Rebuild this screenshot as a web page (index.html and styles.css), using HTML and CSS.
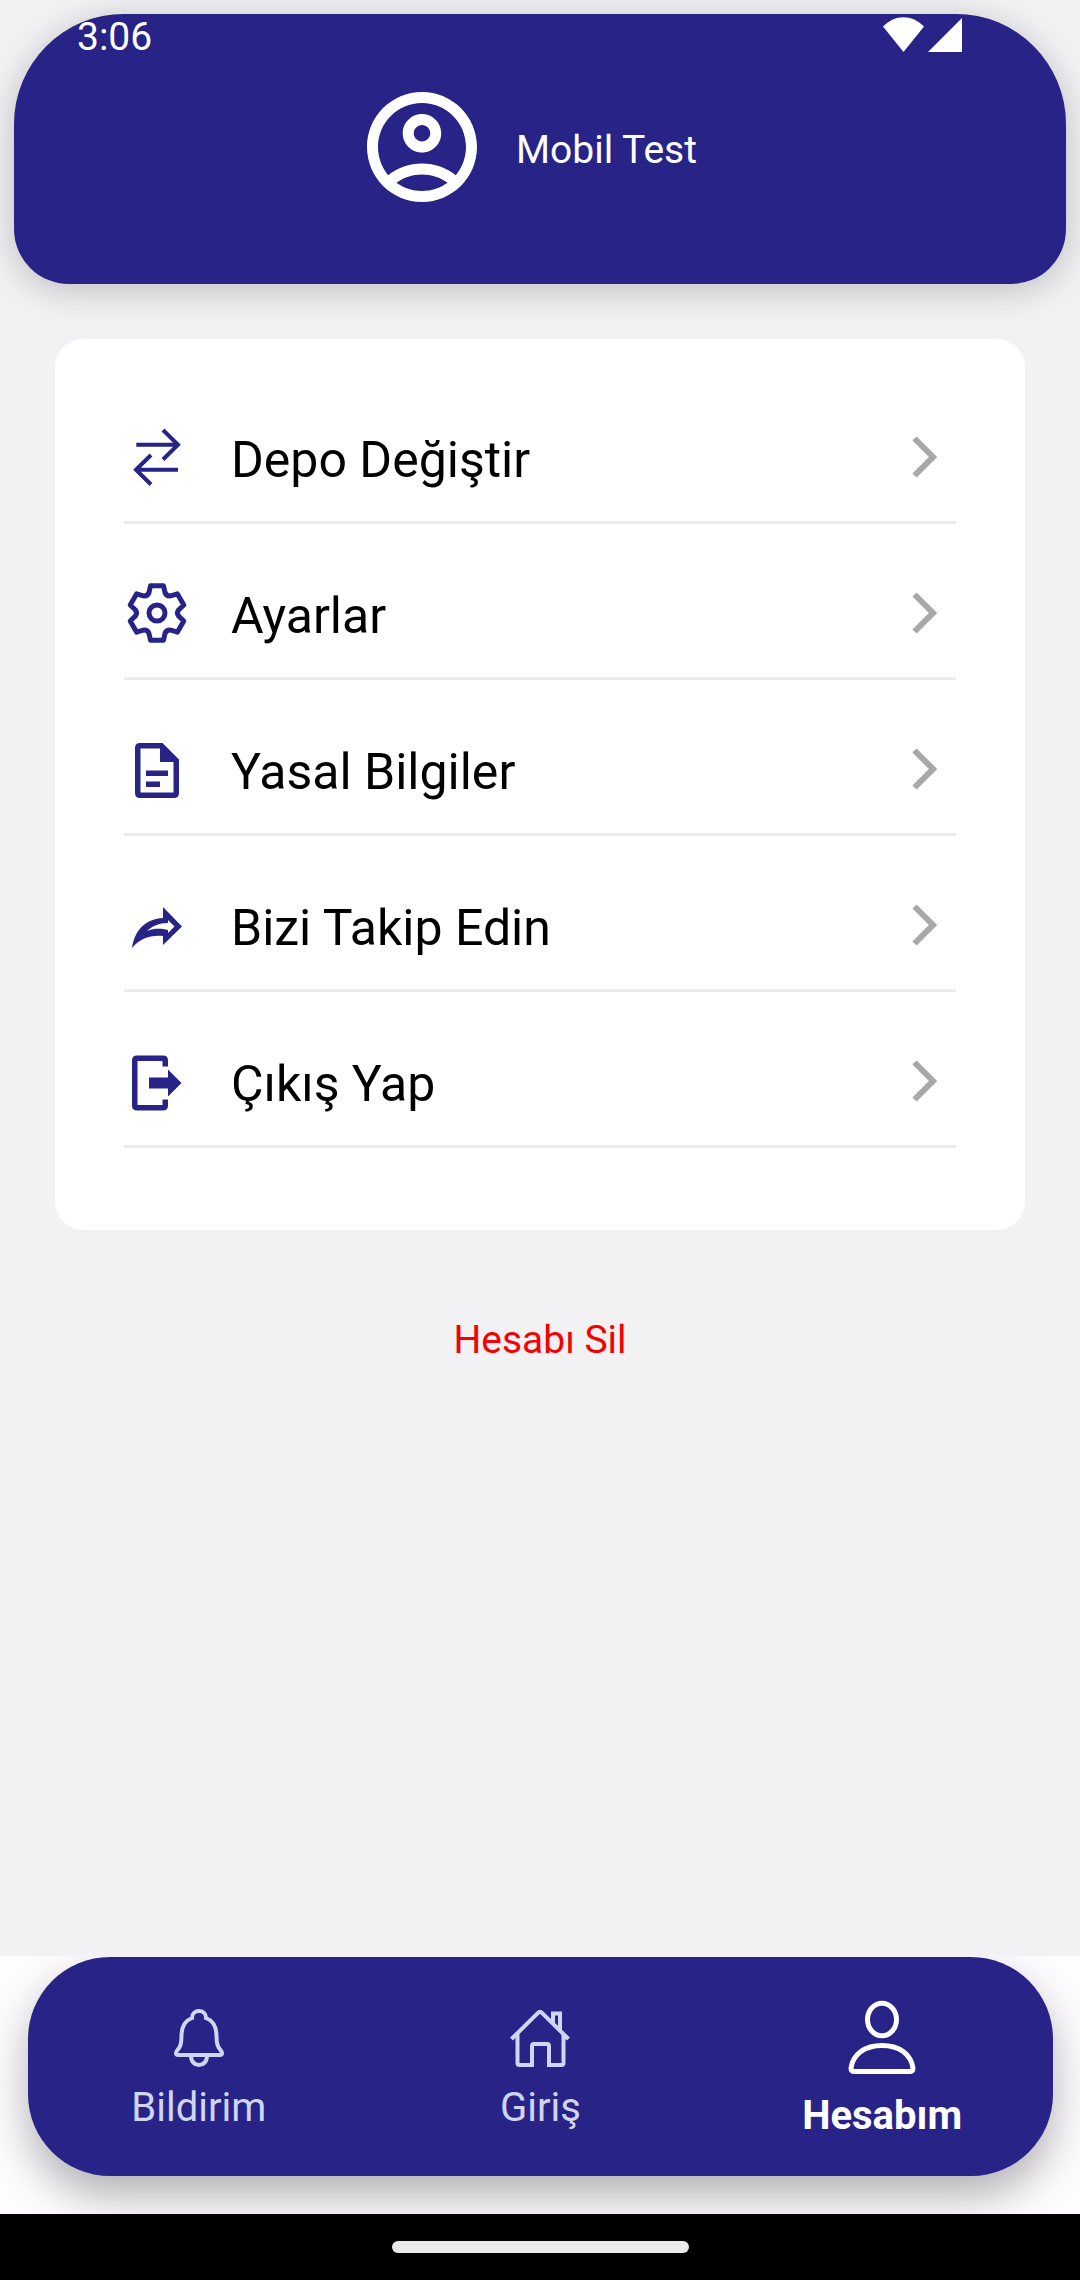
FILE: index.html
```html
<!DOCTYPE html>
<html lang="tr">
<head>
<meta charset="utf-8">
<meta name="viewport" content="width=device-width, initial-scale=1">
<title>Hesabım</title>
<link rel="stylesheet" href="styles.css">
</head>
<body>
<header class="header">
  <div class="status">
    <span>3:06</span>
    <span class="status-icons">
      <svg width="41" height="35" viewBox="0 0 41 35" aria-hidden="true"><path d="M20.500 35L0 9.500C12-3 29-3 41 9.500Z"/></svg>
      <svg width="34" height="35" viewBox="0 0 34 35" aria-hidden="true"><path d="M34 1V35H0Z"/></svg>
    </span>
  </div>
  <div class="profile">
    <svg class="avatar" viewBox="0 0 24 24" aria-hidden="true"><path d="M12 2C6.480 2 2 6.480 2 12s4.480 10 10 10 10-4.480 10-10S17.520 2 12 2zM7.350 18.500C8.660 17.560 10.260 17 12 17s3.340.560 4.650 1.500C15.340 19.440 13.740 20 12 20s-3.340-.560-4.650-1.500zm10.790-1.380C16.450 15.800 14.320 15 12 15s-4.450.800-6.140 2.120C4.700 15.730 4 13.950 4 12c0-4.420 3.580-8 8-8s8 3.580 8 8c0 1.950-.700 3.730-1.860 5.120z"/><path d="M12 6c-1.930 0-3.500 1.570-3.500 3.500S10.070 13 12 13s3.500-1.570 3.500-3.500S13.930 6 12 6zm0 5c-.830 0-1.500-.670-1.500-1.500S11.170 8 12 8s1.500.670 1.500 1.500S12.830 11 12 11z"/></svg>
    <span class="name">Mobil Test</span>
  </div>
</header>

<main class="main">
  <ul class="menu">
    <li><button class="row" type="button">
      <svg class="icon line" viewBox="0 0 66 66" aria-hidden="true"><path d="M12.300 20.700H53M39 6L54 20.700L39 35.500M54 45.700H13M27 31L12 45.700L27 60.500"/></svg>
      <span class="label">Depo Değiştir</span>
      <svg class="chevron" viewBox="0 0 26 42" aria-hidden="true"><path d="M2.500 2.500L21 21L2.500 39.500"/></svg>
    </button></li>
    <li><button class="row" type="button">
      <svg class="icon gear" viewBox="-33 -33 66 66" aria-hidden="true"><path d="M-8-20.500L-6.500-27.200H6.500L8-20.500Q9.500-16.500 13.800-17.200L20.300-19.200L26.800-8L21.800-3.300Q19 0 21.800 3.300L26.800 8L20.300 19.200L13.800 17.200Q9.500 16.500 8 20.500L6.500 27.200H-6.500L-8 20.500Q-9.500 16.500-13.800 17.200L-20.300 19.200L-26.800 8L-21.800 3.300Q-19 0-21.800-3.300L-26.800-8L-20.300-19.200L-13.800-17.200Q-9.500-16.500-8-20.500Z"/><circle r="8"/></svg>
      <span class="label">Ayarlar</span>
      <svg class="chevron" viewBox="0 0 26 42" aria-hidden="true"><path d="M2.500 2.500L21 21L2.500 39.500"/></svg>
    </button></li>
    <li><button class="row" type="button">
      <svg class="icon" viewBox="0 0 66 66" aria-hidden="true"><path fill-rule="evenodd" d="M16 7H38.500L55 23.500V57Q55 62 50 62H16Q11 62 11 57V12Q11 7 16 7ZM16.500 12.500V56.500H49.500V26H36V12.500Z"/><path d="M22 34.500H44V40H22ZM22 45.500H36V51H22Z"/></svg>
      <span class="label">Yasal Bilgiler</span>
      <svg class="chevron" viewBox="0 0 26 42" aria-hidden="true"><path d="M2.500 2.500L21 21L2.500 39.500"/></svg>
    </button></li>
    <li><button class="row" type="button">
      <svg class="icon" viewBox="0 0 66 66" aria-hidden="true"><path fill-rule="evenodd" d="M39 15L58 34.500L39 53V44C25 43 16 47 8 56C11 37 22 27 39 26ZM44 28V31C35 31 28 34 23 39C30 36 38 36.500 44 38V41L50.500 34.500Z"/></svg>
      <span class="label">Bizi Takip Edin</span>
      <svg class="chevron" viewBox="0 0 26 42" aria-hidden="true"><path d="M2.500 2.500L21 21L2.500 39.500"/></svg>
    </button></li>
    <li><button class="row" type="button">
      <svg class="icon" viewBox="0 0 66 66" aria-hidden="true"><path d="M44 18.500H38.500V13H13.500V57H38.500V51.500H44V57.500Q44 62.500 39 62.500H13Q8 62.500 8 57.500V12.500Q8 7.500 13 7.500H39Q44 7.500 44 12.500ZM25 29.500H44V21.500L57.500 35L44 48.500V40.500H25Z"/></svg>
      <span class="label">Çıkış Yap</span>
      <svg class="chevron" viewBox="0 0 26 42" aria-hidden="true"><path d="M2.500 2.500L21 21L2.500 39.500"/></svg>
    </button></li>
  </ul>
  <button class="delete" type="button">Hesabı Sil</button>
</main>

<footer class="footer">
  <nav class="tabs">
    <a class="tab" href="#bildirim">
      <svg width="50" height="58" viewBox="0 0 50 58" aria-hidden="true"><path d="M18 9C18-.300 32-.300 32 9C40 12 42.500 19 42.500 27C42.500 36 44 38 47.500 42.500Q49 46 46 46H4Q1 46 2.500 42.500C6 38 7.500 36 7.500 27C7.500 19 10 12 18 9ZM17 47C17 59 33 59 33 47"/></svg>
      <span>Bildirim</span>
    </a>
    <a class="tab" href="#giris">
      <svg width="60" height="58" viewBox="0 0 60 58" aria-hidden="true"><path d="M1.500 30L28 4Q30 1.500 32 4L58.500 30M7.500 25V54Q7.500 56 9.500 56H22V37Q22 35 24 35H37Q39 35 39 37V56H51.500Q53.500 56 53.500 54V25M43 14V4.500H50V22"/></svg>
      <span>Giriş</span>
    </a>
    <a class="tab active" href="#hesabim" aria-current="page">
      <svg width="68" height="75" viewBox="0 0 68 75" aria-hidden="true"><ellipse cx="34" cy="19.500" rx="14.500" ry="16.300"/><path d="M3 68C5 54 17 45.500 34 45.500S63 54 65 68Q65 71.500 61.500 71.500H6.500Q3 71.500 3 68Z"/></svg>
      <span>Hesabım</span>
    </a>
  </nav>
</footer>
<div class="system-bar"><span class="handle"></span></div>
</body>
</html>
```
FILE: styles.css
```css
* {
  box-sizing: border-box;
}

:root {
  --brand: #272387;
}

body {
  margin: 0;
  min-height: 100vh;
  display: flex;
  flex-direction: column;
  background: #f2f1f3;
  font-family: Roboto, "Noto Sans", sans-serif;
  font-size: 39px;
  line-height: 46px;
}

button {
  font: inherit;
  color: inherit;
  border: 0;
  background: none;
  cursor: pointer;
}

.header {
  margin: 14px;
  margin-bottom: 55px;
  padding-bottom: 71px;
  border-radius: 110px 110px 55px 55px;
  background: var(--brand);
  color: #fff;
  fill: #fff;
  box-shadow: 0 6px 36px rgba(0, 0, 0, 0.22);
}

.status {
  display: flex;
  justify-content: space-between;
  align-items: center;
  padding: 0 104px 0 63px;
}

.status-icons {
  display: flex;
  gap: 4px;
  padding-bottom: 5px;
}

.profile {
  display: flex;
  justify-content: center;
  align-items: center;
  gap: 28px;
  margin-top: 21px;
  padding-right: 27px;
}

.name,
.label {
  padding-top: 5px;
}

.avatar {
  width: 132px;
  height: 132px;
}

.main {
  flex: 1;
  display: flex;
  flex-direction: column;
  padding: 0 55px 55px;
}

.menu {
  list-style: none;
  margin: 0;
  padding: 29px 69px 82px;
  border-radius: 28px;
  background: #fff;
}

.row {
  display: flex;
  align-items: center;
  gap: 41px;
  width: 100%;
  padding: 56px 18px 31px 0;
  border-bottom: 3px solid #ececee;
  color: #000;
  font-size: 50px;
  line-height: 60px;
  text-align: left;
}

.icon {
  width: 66px;
  height: 66px;
  fill: var(--brand);
}

.icon.line,
.icon.gear {
  fill: none;
  stroke: var(--brand);
  stroke-width: 4;
}

.icon.gear {
  stroke-linejoin: round;
  stroke-width: 5;
}

.label {
  flex: 1;
}

.chevron {
  width: 26px;
  height: 42px;
  fill: none;
  stroke: #a8a8a8;
  stroke-width: 6;
}

.delete {
  align-self: center;
  margin-top: 87px;
  padding: 0;
  color: #f60000;
}

.footer {
  padding: 1px 27px 38px 28px;
  background: #fffcff;
  overflow: hidden;
}

.tabs {
  display: grid;
  grid-template-columns: repeat(3, 1fr);
  align-items: center;
  padding: 43px 0 37px;
  border-radius: 82px;
  background: var(--brand);
  box-shadow: 0 20px 44px rgba(0, 0, 0, 0.3);
}

.tab {
  display: flex;
  flex-direction: column;
  align-items: center;
  gap: 18px;
  color: #cfd5f3;
  font-size: 40px;
  text-decoration: none;
}

.tab svg {
  fill: none;
  stroke: currentColor;
  stroke-width: 4;
}

.tab.active {
  color: #fff;
  font-weight: 700;
}

.tab.active svg {
  stroke-width: 5;
}

.system-bar {
  display: flex;
  justify-content: center;
  padding: 27px 0;
  background: #000;
}

.handle {
  width: 297px;
  height: 12px;
  border-radius: 6px;
  background: #ebe9eb;
}
```
